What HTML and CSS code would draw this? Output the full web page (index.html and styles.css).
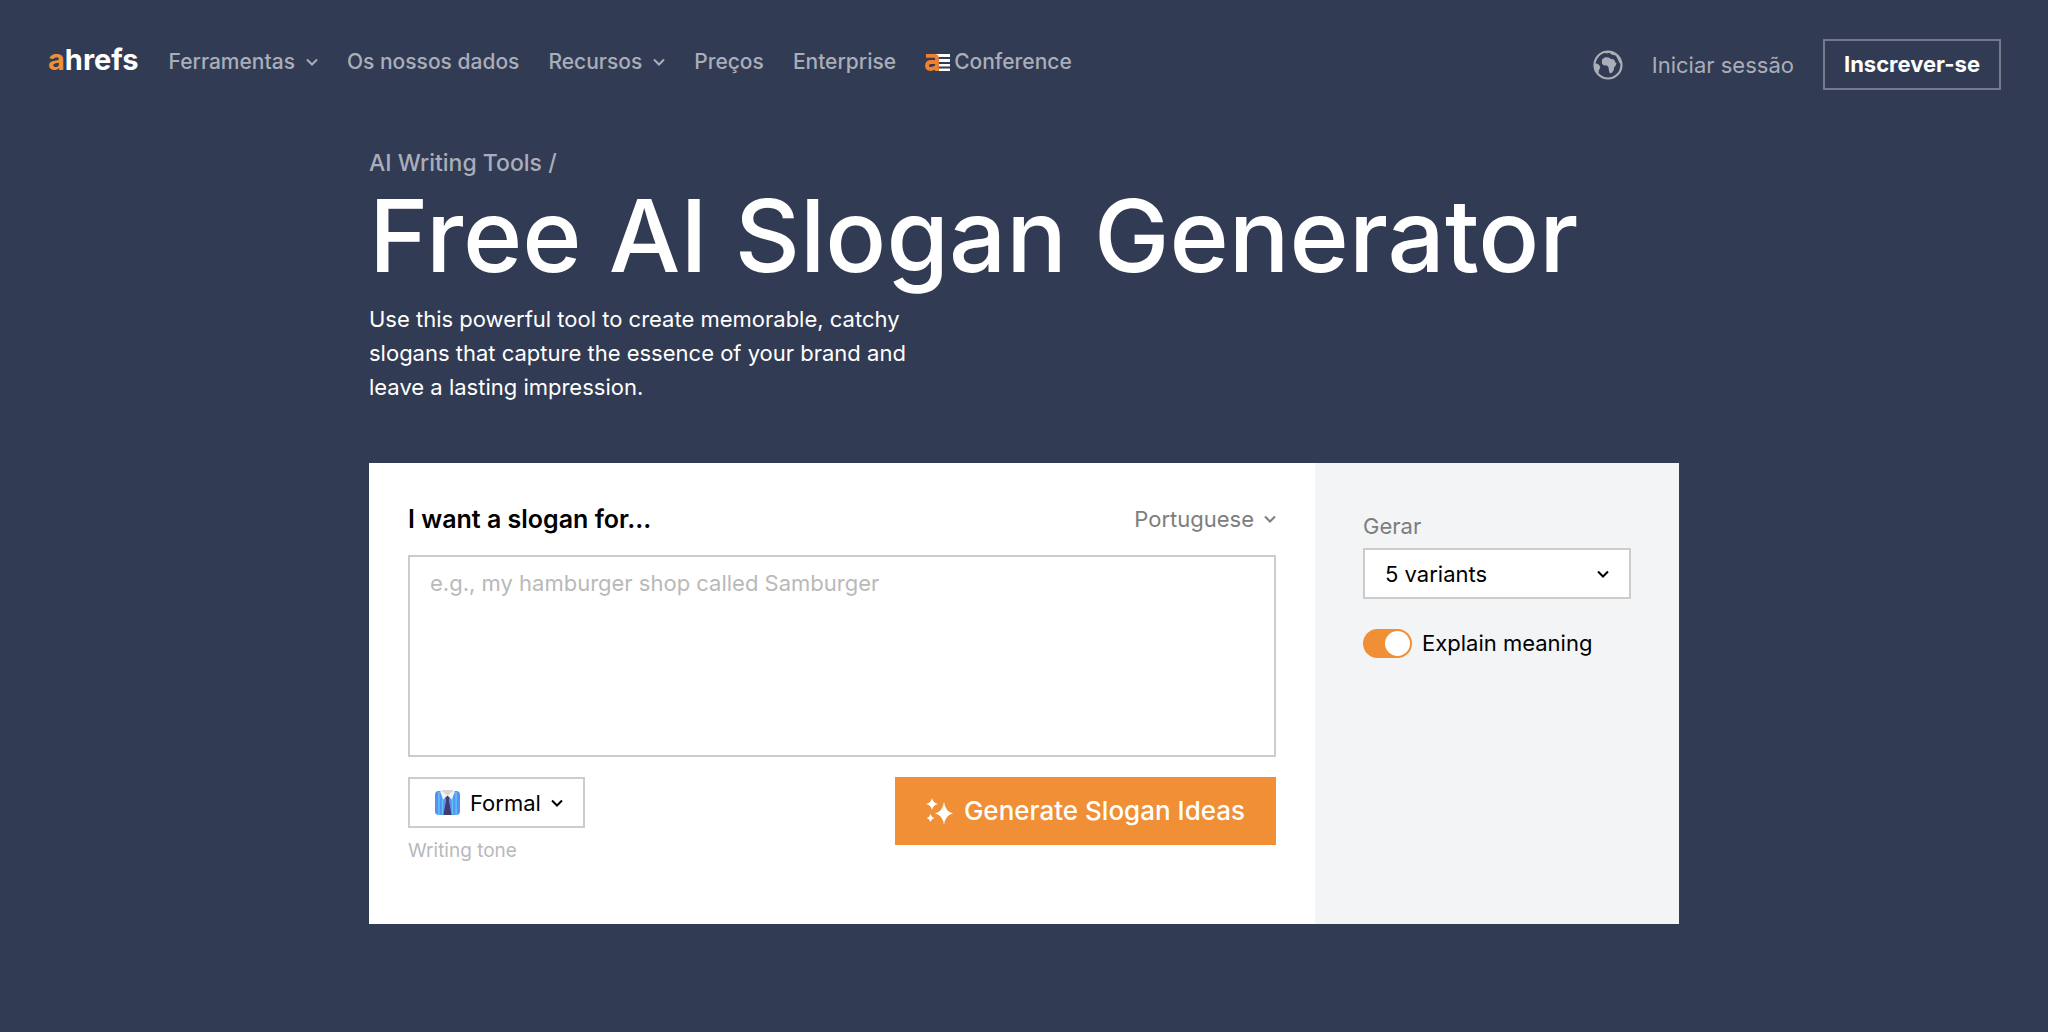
FILE: index.html
```
<!DOCTYPE html>
<html lang="pt">
  <head>
    <meta charset="UTF-8" />
    <meta name="viewport" content="width=device-width, initial-scale=1.0" />
    <title>Free AI Slogan Generator</title>
    <link rel="stylesheet" href="styles.css">
  </head>
  <body>
    <header class="header">
      <a class="logo" href="#"><span class="logo-a">a</span>hrefs</a>
      <nav class="nav">
        <button class="nav-link" type="button">
          Ferramentas
          <svg class="chevron" viewBox="0 0 12 8"><path d="M1 1.5l5 5 5-5" /></svg>
        </button>
        <a class="nav-link" href="#">Os nossos dados</a>
        <button class="nav-link" type="button">
          Recursos
          <svg class="chevron" viewBox="0 0 12 8"><path d="M1 1.5l5 5 5-5" /></svg>
        </button>
        <a class="nav-link" href="#">Preços</a>
        <a class="nav-link" href="#">Enterprise</a>
        <a class="nav-link conference" href="#">
          <svg class="conference-icon" viewBox="0 0 25 17">
            <path fill="#fff" d="M10 0h15v3H10zM14 5h11v3H14zM14 10h11v2.500H14zM14 14.500h11V17H14z" />
            <path fill="none" stroke="#f0802f" stroke-width="3.800" d="M1 1.900h8.500q2.500 0 2.500 2.500V17M12 8H6Q2 8 2 11.500T5.600 15Q9 15 12 12.500" />
          </svg>
          Conference
        </a>
      </nav>
      <div class="account">
        <button class="globe" type="button" aria-label="Idioma">
          <svg viewBox="0 0 30 30">
            <circle cx="15" cy="15" r="13.5" fill="none" stroke="currentColor" stroke-width="2.2" />
            <path fill="currentColor" d="M9 9.5l3-2.2 4 .3 1.500 1.200 3.500.6 1.500 3.200 1 .8-.8 2.200-1.700 1.800v2.200l-1.800 3-2.200.8-1-2.500-.6-4-1.500-1.500-3.400-.2-1.600-1.700zM11.500 1.800Q18 0 23.500 4.500T28.300 14l-1.800-1-2-4.200-1.700-3.200-3.800-.9-2.500-1.900-3.300.6zM1.500 13.500l3.200.2 1.800 1.800.8 2.300-1.300 2.200-.5 3.600Q1 19 1.500 13.500z" />
          </svg>
        </button>
        <a class="login" href="#">Iniciar sessão</a>
        <a class="signup" href="#">Inscrever-se</a>
      </div>
    </header>

    <main class="container">
      <a class="breadcrumb" href="#">AI Writing Tools /</a>
      <h1>Free AI Slogan Generator</h1>
      <p class="intro">Use this powerful tool to create memorable, catchy slogans that capture the essence of your brand and leave a lasting impression.</p>

      <form class="card">
        <div class="card-main">
          <div class="card-head">
            <label class="title" for="prompt">I want a slogan for...</label>
            <div class="select select-language">
              <select aria-label="Language">
                <option>Portuguese</option>
                <option>English</option>
              </select>
              <svg class="chevron" viewBox="0 0 12 8"><path d="M1 1.5l5 5 5-5" /></svg>
            </div>
          </div>
          <textarea id="prompt" placeholder="e.g., my hamburger shop called Samburger"></textarea>
          <div class="card-actions">
            <div class="tone">
              <div class="select select-tone">
                <svg class="tone-icon" viewBox="0 0 24 24">
                  <rect x="0" y="1" width="24" height="23" rx="3.500" fill="#5c8df6" />
                  <path fill="#58c8f5" d="M3 2h1.500v22H3zM6.500 4H8v20H6.500zM16 4h1.500v20H16zM19.500 2H21v22h-1.500z" />
                  <path fill="#d5d5d5" d="M6 0h12l-6 7z" />
                  <path fill="#f3f3f3" d="M6 0l6 5.500-4 3.500-3-7zM18 0l-6 5.500 4 3.500 3-7z" />
                  <path fill="#433b6b" d="M12 5.500l2 1.700-.8 2.300L16 24H8l2.800-14.500-.8-2.300z" />
                </svg>
                <select id="tone">
                  <option>Formal</option>
                  <option>Casual</option>
                </select>
                <svg class="chevron" viewBox="0 0 12 8"><path d="M1 1.500l5 5 5-5" /></svg>
              </div>
              <label class="tone-label" for="tone">Writing tone</label>
            </div>
            <button class="generate" type="button">
              <svg class="sparkles" viewBox="0 0 27 27">
                <path d="M18 4q1.300 9.500 9 11.500-7.700 1.500-9 11.500-1.300-10-9-11.500 7.700-2 9-11.500zM6 0q1 5 6 6-5 1-6 6-1-5-6-6 5-1 6-6zM4.500 16q.8 3.200 3.800 4-3 .8-3.800 4-.8-3.200-3.800-4 3-.8 3.800-4z" />
              </svg>
              Generate Slogan Ideas
            </button>
          </div>
        </div>
        <div class="card-side">
          <label class="side-label" for="variants">Gerar</label>
          <div class="select select-variants">
            <select id="variants">
              <option>1 variant</option>
              <option>3 variants</option>
              <option selected>5 variants</option>
            </select>
            <svg class="chevron" viewBox="0 0 12 8"><path d="M1 1.500l5 5 5-5" /></svg>
          </div>
          <label class="toggle">
            <input type="checkbox" checked />
            Explain meaning
          </label>
        </div>
      </form>
    </main>
  </body>
</html>
```
FILE: styles.css
```
* {
  margin: 0;
  padding: 0;
  box-sizing: border-box;
}

body {
  font-family: Inter, "Liberation Sans", sans-serif;
  font-size: 22px;
  line-height: 30px;
  min-height: 100vh;
  background-color: #323b54;
  color: #fff;
}

a {
  color: inherit;
  text-decoration: none;
}

button,
select,
textarea {
  font: inherit;
  color: inherit;
  background: none;
  border: none;
  border-radius: 0;
}

button {
  cursor: pointer;
}

/* Header */
.header {
  display: flex;
  align-items: flex-start;
  padding: 39px 47px 0 48px;
}

.logo {
  margin: 6px 30px 0 0;
  font-size: 29px;
  font-weight: 700;
}

.logo-a {
  color: #f08f35;
}

.nav {
  display: flex;
  align-items: center;
  gap: 29px;
  margin-top: 8px;
  font-size: 21px;
  font-weight: 500;
  color: #a9aeb9;
}

.nav-link {
  display: flex;
  align-items: center;
  gap: 11px;
}

.chevron {
  width: 12px;
  height: 8px;
  fill: none;
  stroke: currentColor;
  stroke-width: 2;
}

.conference {
  gap: 4px;
}

.conference-icon {
  width: 25px;
  height: 17px;
}

.account {
  display: flex;
  align-items: center;
  gap: 29px;
  margin-left: auto;
  color: #a9aeb9;
}

.globe,
.globe svg {
  display: block;
  width: 30px;
  height: 30px;
}

.signup {
  padding: 8px 19px 9px;
  border: 2px solid #747a8b;
  font-weight: 700;
  color: #fff;
}

/* Content */
.container {
  max-width: 1310px;
  margin: 58px auto 0;
}

.breadcrumb {
  display: block;
  font-size: 23px;
  font-weight: 500;
  color: #a9aeb9;
}

h1 {
  margin-top: 2px;
  font-size: 101px;
  font-weight: 500;
  line-height: 110px;
}

.intro {
  max-width: 560px;
  margin-top: 12px;
  line-height: 34px;
}

/* Card */
.card {
  display: flex;
  margin-top: 59px;
  background-color: #fff;
  color: #000;
}

.card-main {
  flex: 1;
  padding: 41px 39px 61px;
}

.card-head {
  display: flex;
  justify-content: space-between;
  align-items: center;
  margin-bottom: 21px;
}

.title {
  font-size: 25px;
  font-weight: 600;
}

.select {
  display: flex;
  align-items: center;
}

.select select {
  appearance: none;
  field-sizing: content;
  cursor: pointer;
}

.select-language {
  gap: 10px;
  color: #7d7d7d;
}

textarea {
  display: block;
  width: 100%;
  height: 202px;
  padding: 11px 20px;
  border: 2px solid #ccc;
  resize: none;
}

textarea::placeholder {
  color: #b9b9b9;
}

.card-actions {
  display: flex;
  justify-content: space-between;
  align-items: flex-start;
  margin-top: 20px;
}

.tone {
  display: flex;
  flex-direction: column;
  align-items: flex-start;
  gap: 11px;
}

.select-tone {
  gap: 10px;
  height: 51px;
  padding: 0 20px 0 25px;
  border: 2px solid #ccc;
}

.tone-icon {
  width: 25px;
  height: 25px;
}

.tone-label {
  font-size: 19px;
  line-height: 24px;
  color: #b9b9b9;
}

.generate {
  display: flex;
  align-items: center;
  gap: 11px;
  height: 68px;
  padding: 0 31px;
  background-color: #f08f35;
  font-size: 26px;
  font-weight: 500;
  color: #fff;
}

.sparkles {
  width: 27px;
  height: 27px;
  fill: #fff;
}

.card-side {
  width: 364px;
  padding: 48px;
  background-color: #f3f4f6;
}

.side-label {
  display: block;
  margin-bottom: 7px;
  color: #7d7d7d;
}

.select-variants {
  height: 51px;
  padding: 0 20px;
  border: 2px solid #ccc;
  background-color: #fff;
}

.select-variants select {
  flex: 1;
}

.toggle {
  display: flex;
  align-items: center;
  gap: 10px;
  margin-top: 29px;
  cursor: pointer;
}

.toggle input {
  appearance: none;
  width: 49px;
  height: 29px;
  padding: 2px;
  border-radius: 15px;
  background-color: #ccc;
  cursor: pointer;
}

.toggle input::before {
  content: "";
  display: block;
  width: 25px;
  height: 25px;
  border-radius: 50%;
  background-color: #fff;
}

.toggle input:checked {
  background-color: #f08f35;
}

.toggle input:checked::before {
  margin-left: auto;
}
```
